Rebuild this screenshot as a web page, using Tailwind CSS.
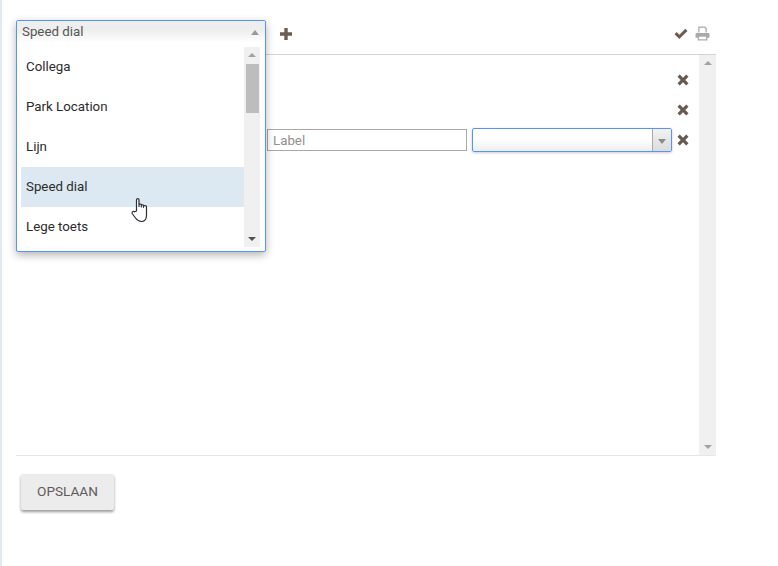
<!DOCTYPE html>
<html lang="nl">
<head>
  <meta charset="UTF-8">
  <title>Toetsen</title>
  <script src="https://cdn.jsdelivr.net/npm/@tailwindcss/browser@4"></script>
</head>
<body class="bg-white font-['Roboto',sans-serif] text-[13.3px] text-[#2b2b2b]">
  <div class="relative h-[566px] w-[778px] overflow-hidden border-l-2 border-[#e2e9f5] pl-[14px]">

    <!-- toolbar -->
    <div class="flex h-[54px] w-[700px] items-end pb-[13px] pl-[263px] pr-[6px]">
      <svg class="h-[14px] w-[14px] text-[#6b5d52]" viewBox="0 0 14 14" fill="currentColor"><path d="M5.300 1h3.400v4.300H13v3.400H8.700V13H5.300V8.700H1V5.300h4.300z"/></svg>
      <div class="ml-auto flex items-center gap-[6px]">
        <svg class="h-[14px] w-[16px] text-[#6b5d52]" viewBox="0 0 15 14" fill="currentColor"><path d="M1 7.300l2.200-2.200 2.600 2.600L11.800 1.700 14 3.900l-8.200 8.200z"/></svg>
        <svg class="h-[15px] w-[15px] text-[#a9a9a9]" viewBox="0 0 14 14" fill="currentColor"><path d="M3 0.500h6.500L11 2v4H9.800V2.600L9 1.700H4.200V6H3z"/><path d="M1.700 6.500h10.600c.7 0 1.200.5 1.200 1.200V11h-2v2.500H2.500V11h-2V7.700c0-.7.500-1.200 1.200-1.200z"/><path fill="#fff" d="M3.700 10h6.600v2.400H3.700z"/></svg>
      </div>
    </div>

    <!-- list panel -->
    <div class="flex h-[402px] w-[700px] border-y border-t-[#d4d4d4] border-b-[#e3e6ec]">
      <div class="flex-1">
        <div class="box-content flex h-[30px] items-center justify-end pr-[10px] pt-[10px]">
          <svg class="h-[12px] w-[12px] text-[#665a50]" viewBox="0 0 12 12" fill="currentColor"><path d="M2.800.5L6 3.700 9.200.5l2.300 2.300L8.300 6l3.200 3.200-2.300 2.300L6 8.300l-3.200 3.200L.5 9.200 3.700 6 .5 2.800z"/></svg>
        </div>
        <div class="flex h-[30px] items-center justify-end pr-[10px]">
          <svg class="h-[12px] w-[12px] text-[#665a50]" viewBox="0 0 12 12" fill="currentColor"><path d="M2.800.5L6 3.700 9.200.5l2.300 2.300L8.300 6l3.200 3.200-2.300 2.300L6 8.300l-3.200 3.200L.5 9.200 3.700 6 .5 2.800z"/></svg>
        </div>
        <div class="flex h-[30px] items-center justify-end pr-[10px]">
          <input type="text" placeholder="Label" class="h-[22px] w-[200px] border border-[#a9a9a9] px-[5px] text-[13.300px] placeholder:text-[#8f8f8f] outline-none">
          <div class="ml-[5px] flex h-[24px] w-[200px] justify-between rounded-[2px] border border-[#5794f7] bg-gradient-to-b from-white from-50% to-[#ededed] shadow-[0_1px_3px_rgba(0,0,0,0.2)]">
            <span></span>
            <span class="flex w-[19px] items-center justify-center border-l border-[#a9a9a9] bg-gradient-to-b from-[#f2f2f2] to-[#dcdcdc]">
              <span class="mt-[2px] h-0 w-0 border-x-[4px] border-t-[5px] border-x-transparent border-t-[#8a8a8a]"></span>
            </span>
          </div>
          <svg class="ml-[5px] h-[12px] w-[12px] text-[#665a50]" viewBox="0 0 12 12" fill="currentColor"><path d="M2.800.5L6 3.700 9.200.5l2.300 2.300L8.300 6l3.200 3.200-2.300 2.300L6 8.300l-3.200 3.200L.5 9.200 3.700 6 .5 2.800z"/></svg>
        </div>
      </div>
      <div class="flex w-[17px] flex-col items-center justify-between bg-[#f0f0f0] py-[6px]">
        <span class="h-0 w-0 border-x-[4px] border-b-[4px] border-x-transparent border-b-[#a3a3a3]"></span>
        <span class="h-0 w-0 border-x-[4px] border-t-[4px] border-x-transparent border-t-[#a3a3a3]"></span>
      </div>
    </div>

    <button class="ml-[5px] mt-[18px] block h-[36px] w-[93px] rounded-[2px] bg-[#ececec] pb-[2px] text-[13.600px] text-[#5f5a5a] shadow-[0_2px_3px_rgba(0,0,0,0.4)]">OPSLAAN</button>

    <!-- open dropdown -->
    <div class="absolute left-[14px] top-[20px] h-[232px] w-[250px] rounded-[2px] border border-[#5794f7] bg-white shadow-[0_3px_8px_rgba(0,0,0,0.3)]">
      <div class="flex h-[22px] items-center justify-between bg-gradient-to-b from-[#eeeeee] from-40% to-white pl-[5px] pr-[6px] text-[#555]">
        <span>Speed dial</span>
        <span class="h-0 w-0 border-x-[4px] border-b-[5px] border-x-transparent border-b-[#9a9a9a]"></span>
      </div>
      <div class="ml-[4px] mt-[4px] flex h-[200px] w-[239px]">
        <ul class="w-[223px]">
          <li class="flex h-[40px] items-center pl-[5px]">Collega</li>
          <li class="flex h-[40px] items-center pl-[5px]">Park Location</li>
          <li class="flex h-[40px] items-center pl-[5px]">Lijn</li>
          <li class="flex h-[40px] items-center bg-[#dce9f2] pl-[5px]">Speed dial</li>
          <li class="flex h-[40px] items-center pl-[5px]">Lege toets</li>
        </ul>
        <div class="flex w-[16px] flex-col items-center bg-[#f0f0f0] pb-[6px] pt-[6px]">
          <span class="h-0 w-0 border-x-[4px] border-b-[4px] border-x-transparent border-b-[#a3a3a3]"></span>
          <span class="mt-[7px] h-[49px] w-[13px] bg-[#bdbdbd]"></span>
          <span class="mt-auto h-0 w-0 border-x-[4px] border-t-[4px] border-x-transparent border-t-[#505050]"></span>
        </div>
      </div>
    </div>

    <!-- mouse pointer -->
    <svg class="absolute left-[129px] top-[197px] h-[26px] w-[20px]" viewBox="0 0 20 26" fill="#fff" stroke="#2b2f36" stroke-width="1.200" stroke-linejoin="round"><path d="M5.500 14V2.800C5.500 1.300 8 1.300 8 2.800V9.500V7.800C8 6.700 10.300 6.700 10.300 7.800V10V8.500C10.300 7.500 12.500 7.500 12.500 8.500V10.300V9.300C12.500 8.300 15.500 8.300 15.500 9.800V18C15.500 21.500 14 24.500 10.500 24.500C7.500 24.500 6 23 4.500 21L1.200 16.500C.5 15 2.500 13.600 3.700 14.800z"/></svg>
  </div>
</body>
</html>
